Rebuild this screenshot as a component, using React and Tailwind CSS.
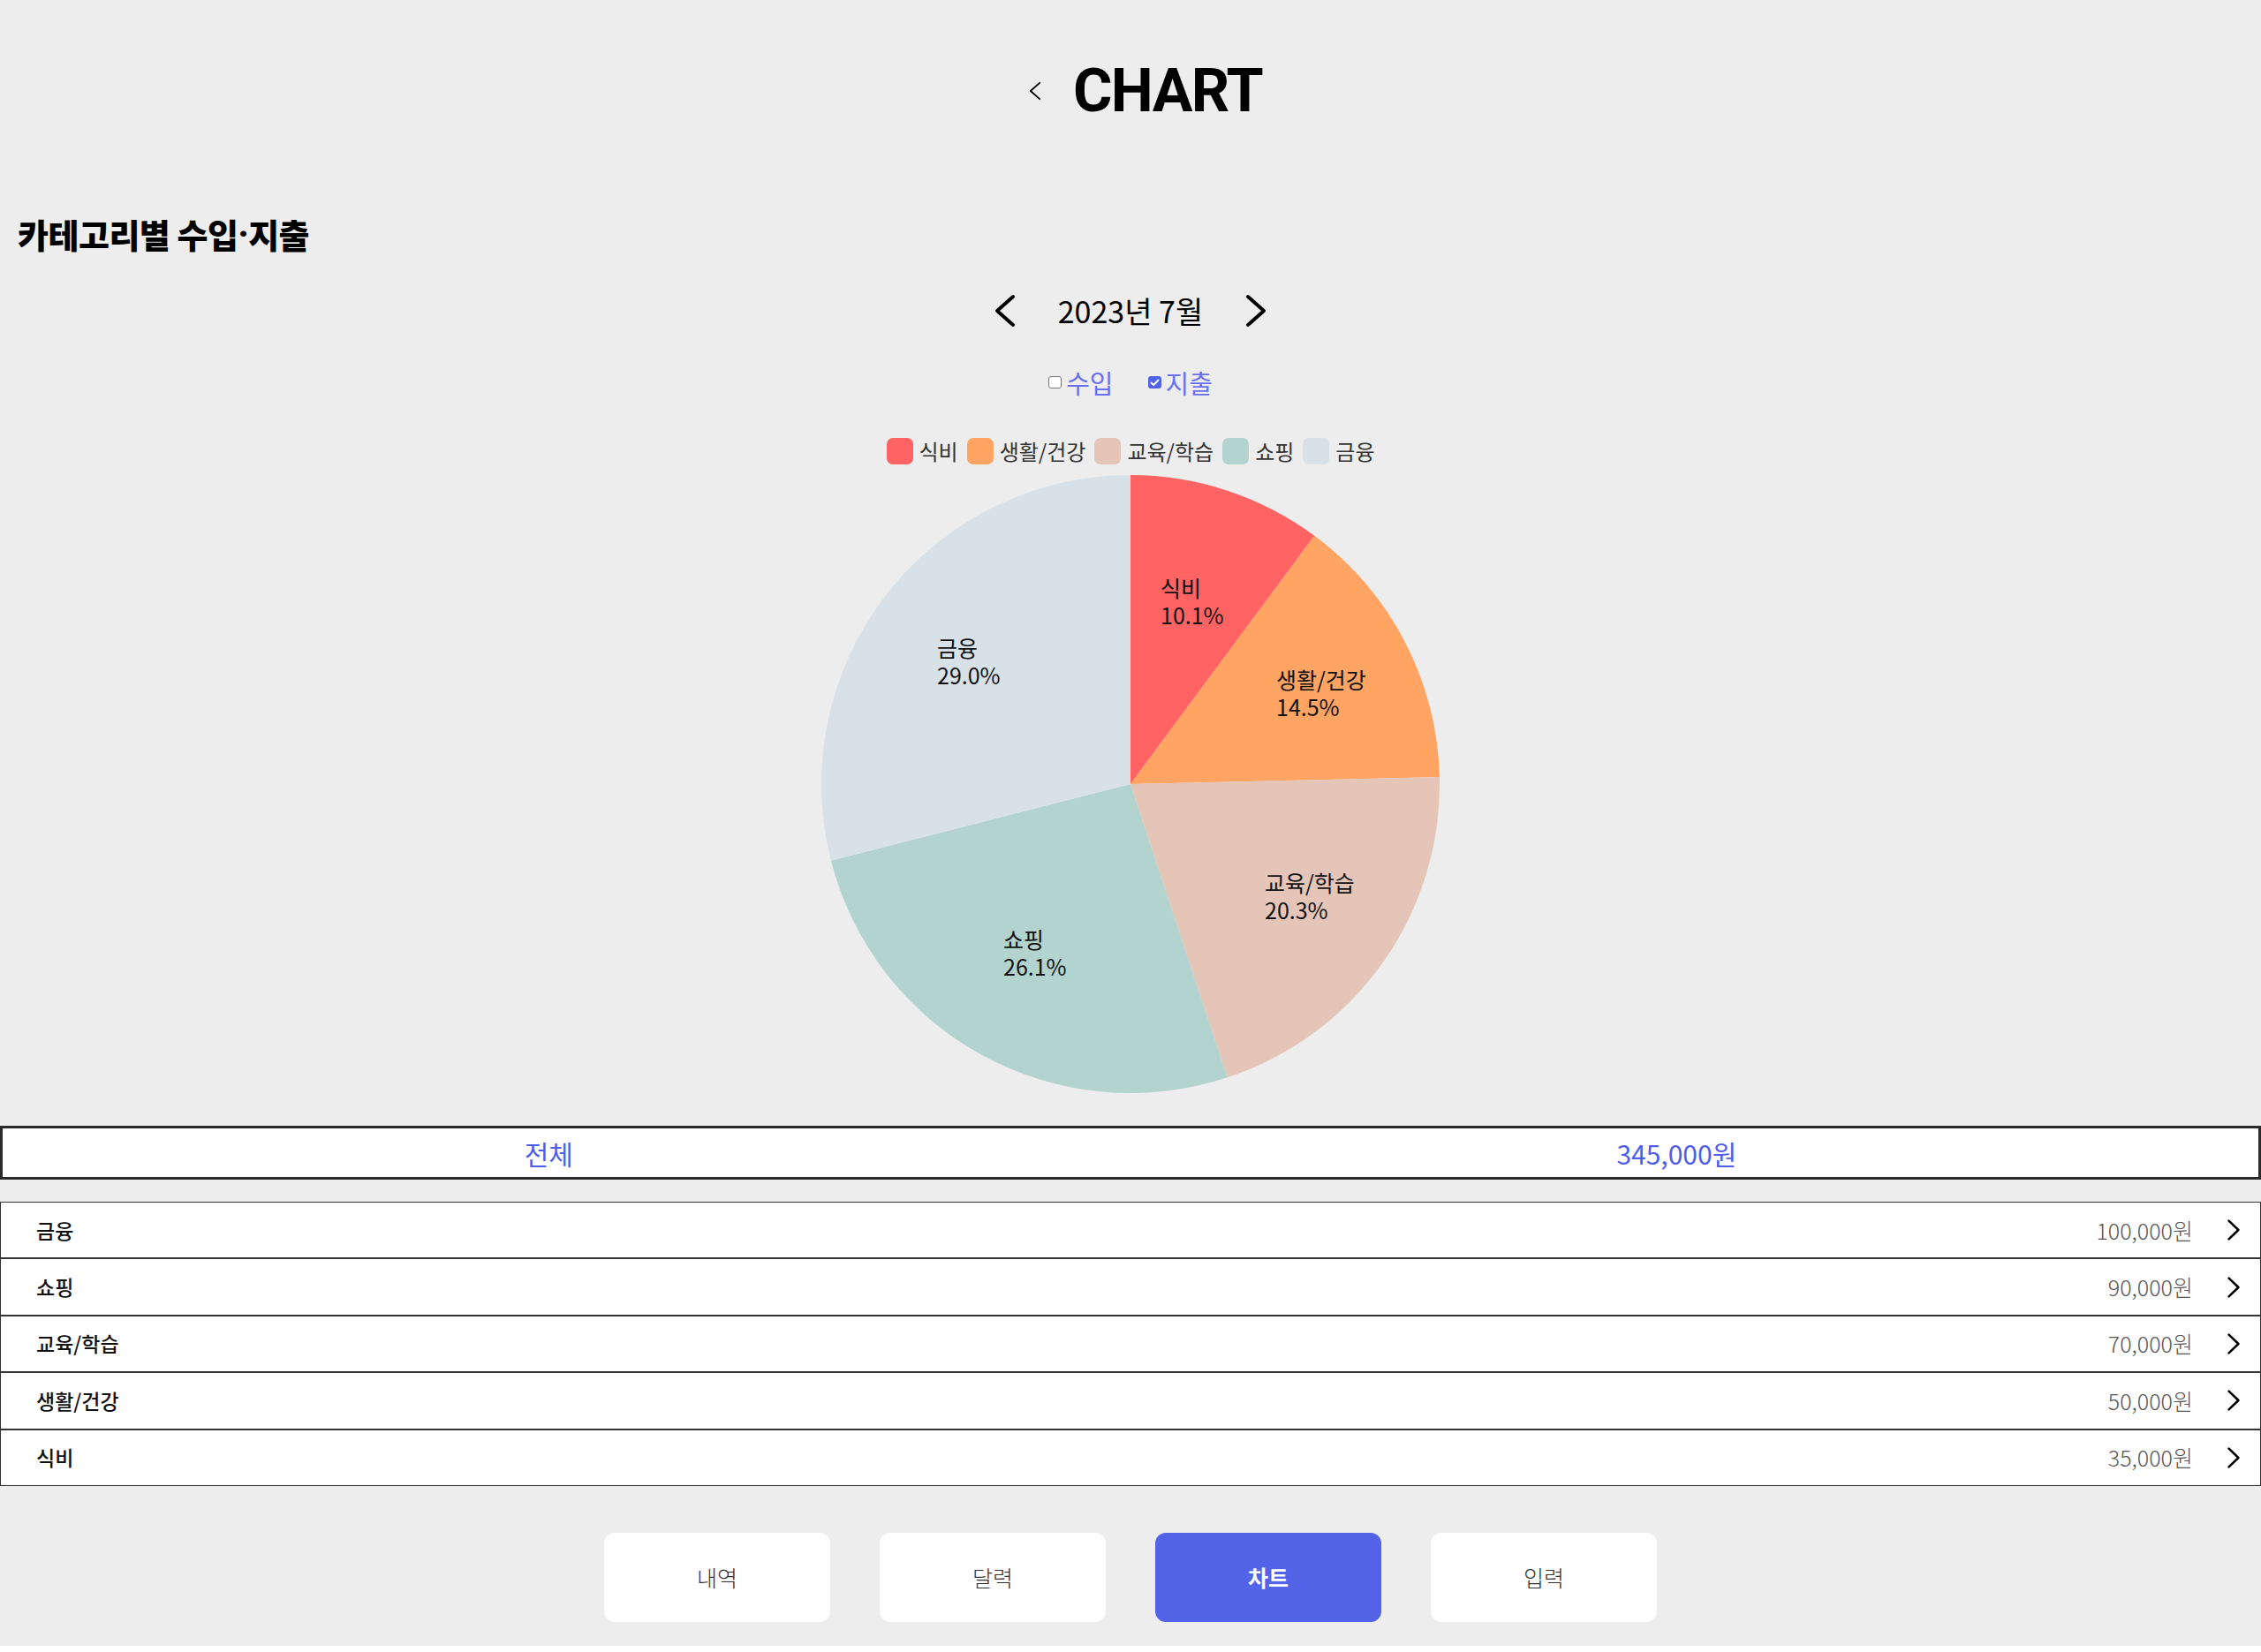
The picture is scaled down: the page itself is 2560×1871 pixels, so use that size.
import React from "react"

const categories = [
  { name: "식비", amount: 35000, color: "#ff6363", lx: 384, ly: 138 },
  { name: "생활/건강", amount: 50000, color: "#ffa462", lx: 515, ly: 242 },
  { name: "교육/학습", amount: 70000, color: "#e4c5b8", lx: 502, ly: 472 },
  { name: "쇼핑", amount: 90000, color: "#b3d4ce", lx: 206, ly: 536 },
  { name: "금융", amount: 100000, color: "#d9e1e8", lx: 131, ly: 206 },
]

const total = categories.reduce((s, c) => s + c.amount, 0)

const Chevron = ({ dir = "right", className = "", w = 16, h = 26, sw = 2.5 }) => (
  <svg width={w} height={h} viewBox={`0 0 ${w} ${h}`} className={className} fill="none">
    {dir === "right" ? (
      <path d={`M${sw} ${sw} L${w - sw} ${h / 2} L${sw} ${h - sw}`} stroke="currentColor" strokeWidth={sw} strokeLinecap="round" strokeLinejoin="round" />
    ) : (
      <path d={`M${w - sw} ${sw} L${sw} ${h / 2} L${w - sw} ${h - sw}`} stroke="currentColor" strokeWidth={sw} strokeLinecap="round" strokeLinejoin="round" />
    )}
  </svg>
)

const Pie = () => {
  const cx = 350
  const cy = 350
  const r = 350
  let angle = -Math.PI / 2
  const slices = categories.map((c) => {
    const a0 = angle
    const a1 = angle + (c.amount / total) * Math.PI * 2
    angle = a1
    const x0 = cx + r * Math.cos(a0)
    const y0 = cy + r * Math.sin(a0)
    const x1 = cx + r * Math.cos(a1)
    const y1 = cy + r * Math.sin(a1)
    const large = a1 - a0 > Math.PI ? 1 : 0
    return { ...c, d: `M${cx} ${cy} L${x0} ${y0} A${r} ${r} 0 ${large} 1 ${x1} ${y1} Z` }
  })
  return (
    <svg width="700" height="700" viewBox="0 0 700 700">
      {slices.map((s) => (
        <path key={s.name} d={s.d} fill={s.color} />
      ))}
      {slices.map((s) => (
        <text key={s.name + "t"} x={s.lx} y={s.ly} fontSize="25" fill="#111">
          <tspan x={s.lx}>{s.name}</tspan>
          <tspan x={s.lx} dy="31">{((s.amount / total) * 100).toFixed(1)}%</tspan>
        </text>
      ))}
    </svg>
  )
}

export default function App() {
  const rows = [...categories].sort((a, b) => b.amount - a.amount)

  return (
    <div className="w-full bg-[#ededed] flex flex-col pb-[27px] font-['Noto_Sans_CJK_KR',sans-serif] text-[#111]">
      <header className="h-[206px] flex items-center justify-center gap-[36px] pl-[34px]">
        <Chevron dir="left" w={14} h={22} sw={1.8} className="text-black" />
        <h1 className="font-['Roboto',sans-serif] font-bold text-[68px] leading-none tracking-tight text-black">CHART</h1>
      </header>

      <h2 className="mt-[34px] h-[50px] flex items-center pl-[20px] text-[38px] font-black leading-none text-black tracking-[-0.5px]">
        카테고리별 수입<span className="font-['Roboto',sans-serif] font-black">·</span>지출
      </h2>

      <div className="mt-[37px] h-[50px] flex items-center justify-center gap-[47px]">
        <Chevron dir="left" w={26} h={40} sw={4} className="text-black" />
        <span className="text-[34px] leading-none text-black">2023년 7월</span>
        <Chevron dir="right" w={26} h={40} sw={4} className="text-black" />
      </div>

      <div className="mt-[36px] h-[40px] flex items-center justify-center gap-[39px] text-[29px] text-[#6a70f0]">
        <label className="flex items-center gap-[5px]">
          <span className="w-[15px] h-[14px] rounded-[3px] border border-[#777] bg-white" />
          <span className="leading-none">수입</span>
        </label>
        <label className="flex items-center gap-[5px]">
          <span className="w-[15px] h-[14px] rounded-[3px] bg-[#5363e8] flex items-center justify-center">
            <svg width="11" height="9" viewBox="0 0 11 9" fill="none">
              <path d="M1.5 4.5 L4.2 7 L9.5 1.5" stroke="white" strokeWidth="2" strokeLinecap="round" strokeLinejoin="round" />
            </svg>
          </span>
          <span className="leading-none">지출</span>
        </label>
      </div>

      <div className="mt-[42px] h-[32px] flex items-center justify-center gap-[10px] text-[24px] text-[#333]">
        {categories.map((c) => (
          <div key={c.name} className="flex items-center gap-[7px]">
            <span className="w-[30px] h-[30px] rounded-[7px]" style={{ backgroundColor: c.color }} />
            <span className="leading-none">{c.name}</span>
          </div>
        ))}
      </div>

      <div className="mt-[11px] flex justify-center">
        <Pie />
      </div>

      <div className="mt-[37px] h-[61px] border-[3px] border-[#2b2b2b] bg-white flex items-center justify-around text-[30px] text-[#4f5ee8]">
        <span className="leading-none">전체</span>
        <span className="leading-none">{total.toLocaleString()}원</span>
      </div>

      <div className="mt-[25px] flex flex-col">
        {rows.map((c) => (
          <div key={c.name} className="h-[64.4px] border border-[#333] bg-white flex items-center justify-between pl-[40px] pr-[22px]">
            <span className="text-[23px] font-medium leading-none text-[#111]">{c.name}</span>
            <div className="flex items-center gap-[38px]">
              <span className="text-[25px] font-light leading-none text-[#555]">{c.amount.toLocaleString()}원</span>
              <Chevron dir="right" w={16} h={26} sw={2.6} className="text-black" />
            </div>
          </div>
        ))}
      </div>

      <nav className="mt-[53px] flex justify-center gap-[56px]">
        {["내역", "달력", "차트", "입력"].map((t) => (
          <button
            key={t}
            className={`w-[256px] h-[101px] rounded-[12px] flex items-center justify-center text-[25px] ${
              t === "차트" ? "bg-[#5263e8] text-white font-bold" : "bg-white text-[#333] font-light"
            }`}
          >
            {t}
          </button>
        ))}
      </nav>
    </div>
  )
}
